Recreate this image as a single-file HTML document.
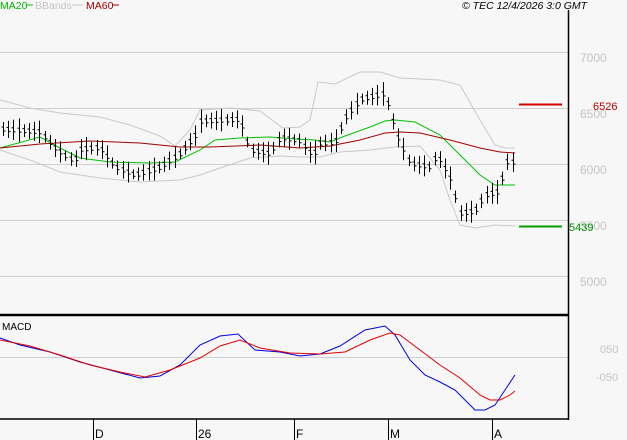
<!DOCTYPE html>
<html><head><style>
body{margin:0;background:#f7f7f7;width:627px;height:440px;overflow:hidden}
svg{display:block;font-family:"Liberation Sans",sans-serif}
</style></head><body>
<svg id="s" width="627" height="440" xmlns="http://www.w3.org/2000/svg">
<rect width="627" height="440" fill="#f7f7f7"/>
<g stroke="#cfcfcf" stroke-width="1">
<line x1="0" y1="52.5" x2="568" y2="52.5"/><line x1="0" y1="108.5" x2="568" y2="108.5"/>
<line x1="0" y1="164.5" x2="568" y2="164.5"/><line x1="0" y1="220.5" x2="568" y2="220.5"/>
<line x1="0" y1="276.5" x2="568" y2="276.5"/><line x1="0" y1="357.5" x2="568" y2="357.5"/>
</g>
<g fill="#c4c4c4" font-size="12">
<text x="580" y="62">7000</text><text x="580" y="118">6500</text><text x="580" y="174">6000</text>
<text x="580" y="230">5500</text><text x="580" y="286">5000</text>
<text x="600" y="353" font-size="11">050</text><text x="596" y="381" font-size="11">-050</text>
</g>
<g fill="none" stroke="#c8c8c8">
<polyline points="0,100 30,108 60,113 100,117 130,125 160,136 175,146 190,130 200,110 230,108 260,111 283,128 300,127 310,120 318,82 335,84 360,72 380,72 400,78 440,80 460,85 480,120 495,145 505,148 515,148"/>
<polyline points="0,150 30,160 60,172 100,178 140,182 180,180 200,175 220,168 250,158 280,156 300,157 320,157 340,152 370,150 395,147 420,146 440,170 450,200 460,225 475,228 495,225 515,226"/>
</g>
<polyline fill="none" stroke="#00c000" points="0,148 40,137 60,148 80,158 110,162 150,163 175,162 200,150 215,140 240,138 270,137 295,139 315,140 330,142 345,136 370,127 385,121 395,120 415,122 440,135 460,155 480,175 495,185 515,185"/>
<polyline fill="none" stroke="#a00000" points="0,148 40,144 90,141 140,143 180,147 210,147 260,145 300,148 330,146 360,140 385,133 400,132 420,133 450,140 480,148 500,152 515,153"/>
<g id="bars" stroke="#000" stroke-width="1"></g>
<line x1="519" y1="104.5" x2="562" y2="104.5" stroke="#d00000" stroke-width="2"/>
<line x1="519" y1="226.5" x2="562" y2="226.5" stroke="#00a000" stroke-width="2"/>
<text x="593" y="110" fill="#c00000" font-size="11">6526</text>
<text x="569" y="231" fill="#009000" font-size="11">5439</text>
<polyline fill="none" stroke="#0000e0" points="0,338 20,345 50,352 80,362 110,370 140,378 160,376 180,365 200,345 220,336 238,334 255,350 280,352 300,356 320,354 340,346 365,330 385,326 395,335 410,360 425,375 440,382 455,390 470,405 475,410 485,410 495,405 505,390 515,375"/>
<polyline fill="none" stroke="#e00000" points="0,340 30,346 60,355 90,365 120,372 145,377 170,370 200,358 220,346 240,340 260,348 290,353 320,354 345,352 370,340 390,333 400,335 420,350 440,365 460,378 480,395 490,400 500,400 510,395 515,391"/>
<line x1="568.5" y1="10" x2="568.5" y2="420" stroke="#000" stroke-width="1.5"/>
<line x1="0" y1="315" x2="568" y2="315" stroke="#000" stroke-width="2.5"/>
<line x1="0" y1="419" x2="568" y2="419" stroke="#000" stroke-width="1.5"/>
<g stroke="#000"><line x1="93.5" y1="419" x2="93.5" y2="440"/><line x1="196.5" y1="419" x2="196.5" y2="440"/><line x1="294.5" y1="419" x2="294.5" y2="440"/><line x1="388.5" y1="419" x2="388.5" y2="440"/><line x1="492.5" y1="419" x2="492.5" y2="440"/></g>
<g font-size="12" fill="#000"><text x="95" y="438">D</text><text x="198" y="438">26</text><text x="296" y="438">F</text><text x="390" y="438">M</text><text x="494" y="438">A</text></g>
<text x="2" y="330" font-size="10" fill="#000">MACD</text>
<g font-size="10.5"><text x="0" y="9" fill="#00b000">MA20</text><line x1="27" y1="5" x2="33" y2="5" stroke="#00c000"/>
<text x="35" y="9" fill="#c4c4c4">BBands</text><line x1="72" y1="5" x2="83" y2="5" stroke="#c4c4c4"/>
<text x="86" y="9" fill="#a00000">MA60</text><line x1="112" y1="5" x2="119" y2="5" stroke="#a00000"/>
<text x="462" y="9" fill="#000" font-style="italic">© TEC 12/4/2026 3:0 GMT</text></g>
</svg>
<script>
var pts=[[2,130],[40,130],[55,145],[70,155],[100,150],[115,168],[135,175],[160,165],[180,150],[200,125],[240,120],[250,150],[270,152],[280,135],[300,137],[310,148],[335,145],[345,120],[360,100],[385,92],[390,110],[398,135],[410,160],[440,163],[450,180],[460,215],[475,212],[485,195],[500,190],[505,160],[515,160]];
function f(x){for(var i=1;i<pts.length;i++){if(x<=pts[i][0]){var a=pts[i-1],b=pts[i];return a[1]+(b[1]-a[1])*(x-a[0])/(b[0]-a[0]);}}return 160;}
var g=document.getElementById('bars'),h='';
for(var x=3;x<=514;x+=5.2){var xx=Math.round(x)+.5,y=f(x)+((x*7)%9-4),r=5+((x*3)%7);
h+='<line x1="'+xx+'" y1="'+(y-r)+'" x2="'+xx+'" y2="'+(y+r)+'"/><line x1="'+(xx-2)+'" y1="'+(y-2)+'" x2="'+xx+'" y2="'+(y-2)+'"/><line x1="'+xx+'" y1="'+(y+2)+'" x2="'+(xx+2)+'" y2="'+(y+2)+'"/>';}
g.innerHTML=h;
</script>
</body></html>
